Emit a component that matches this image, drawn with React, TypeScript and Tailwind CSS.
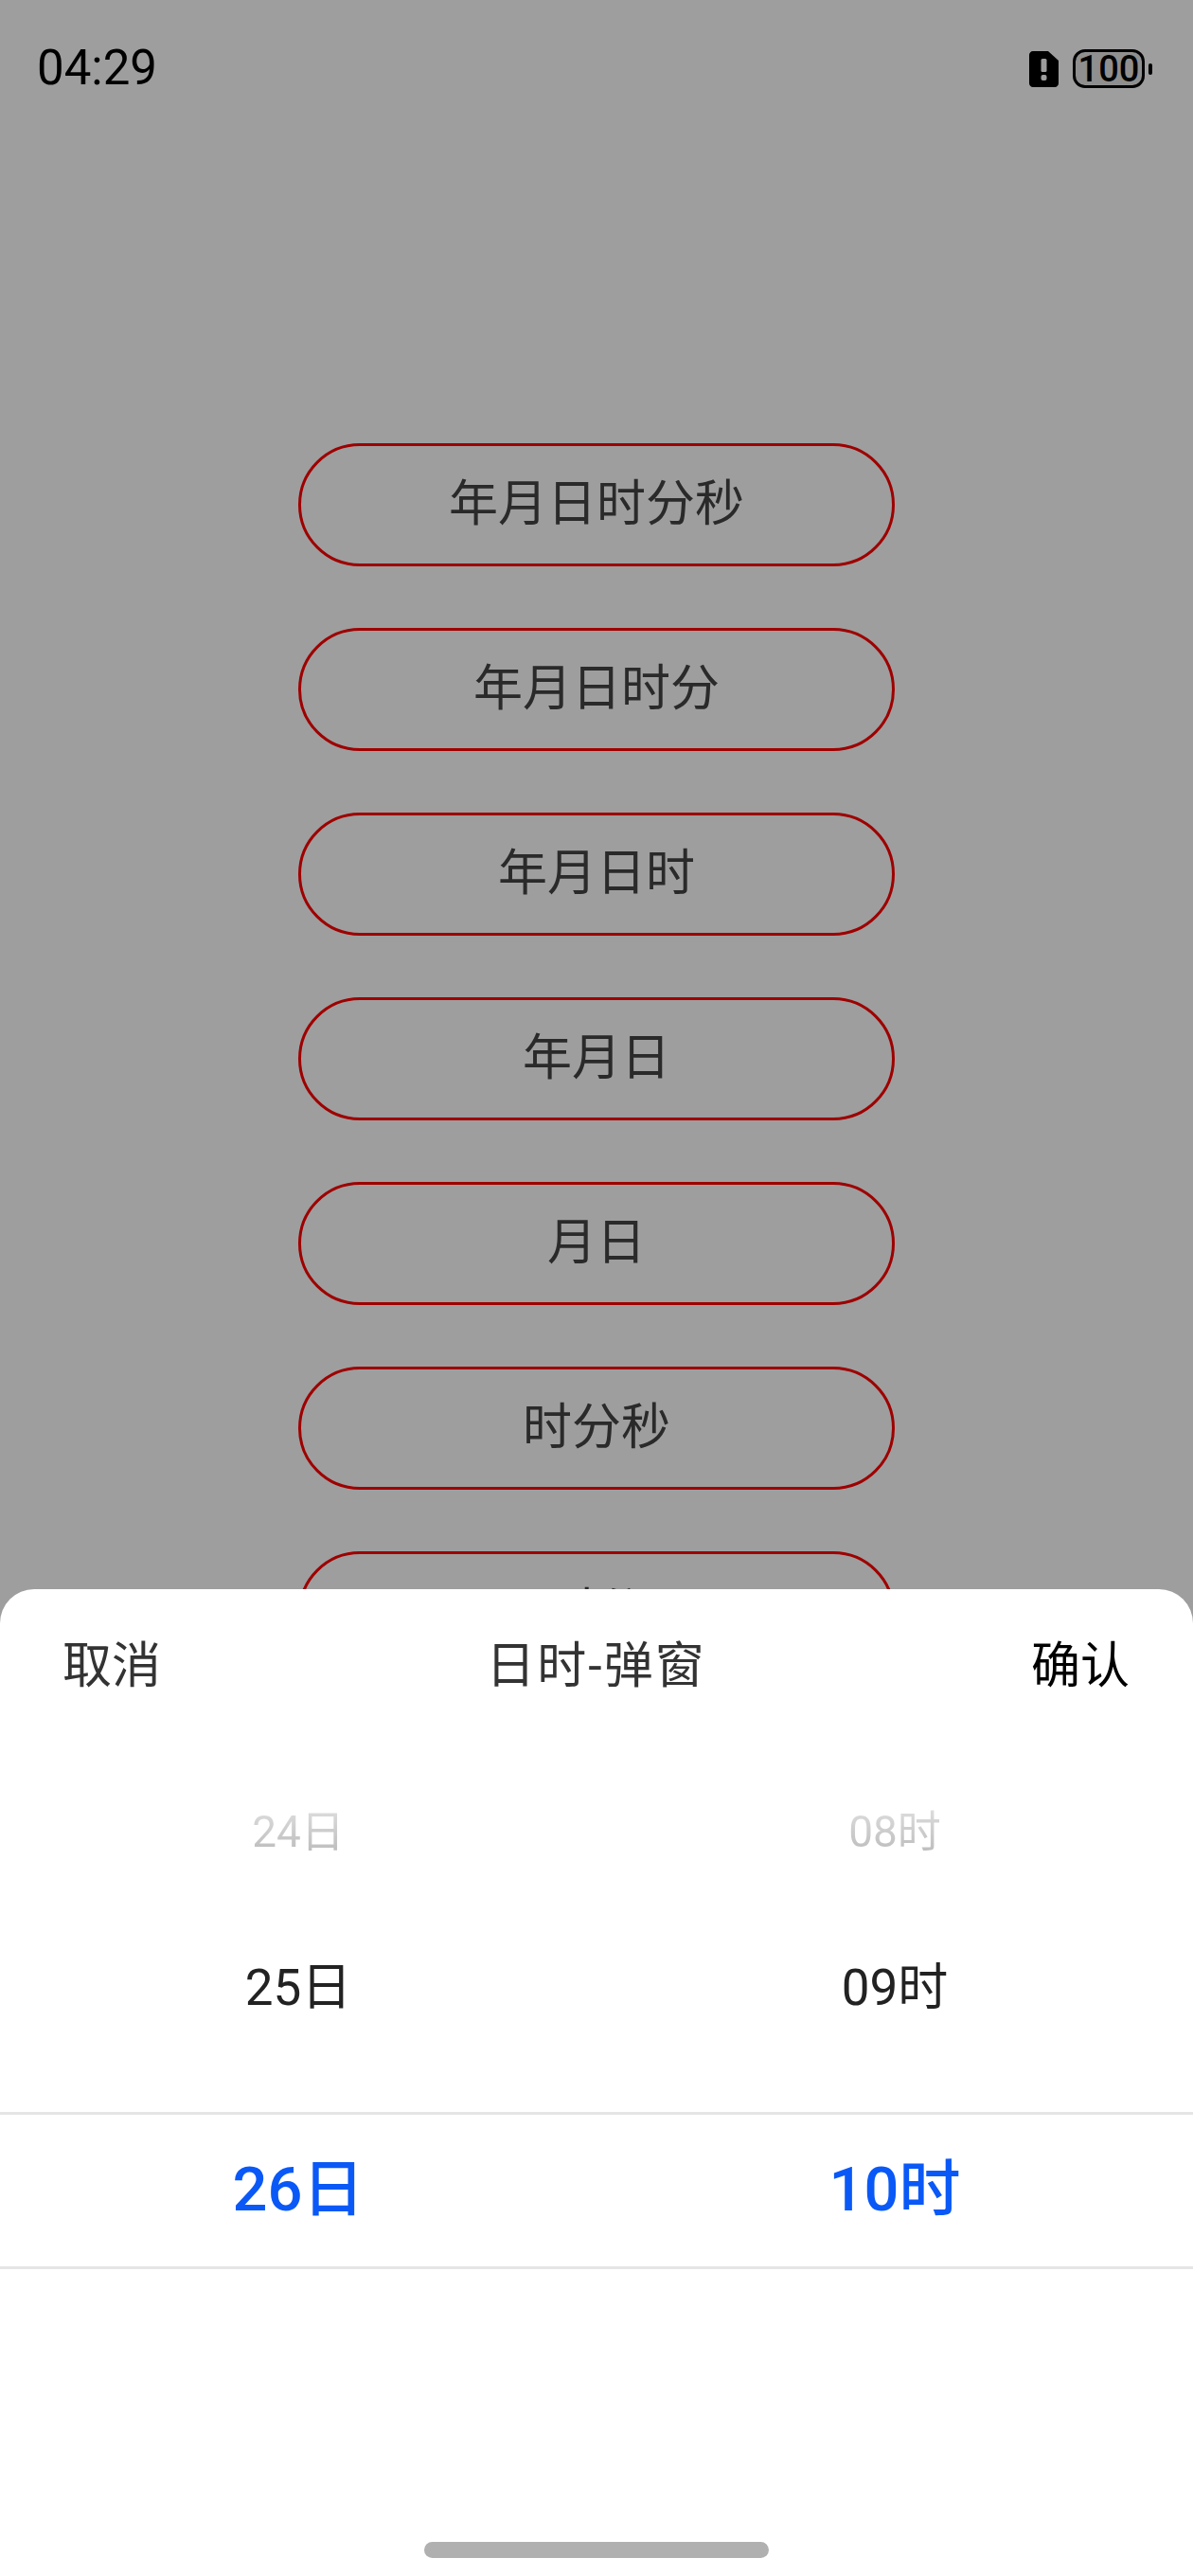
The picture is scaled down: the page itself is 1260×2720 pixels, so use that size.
const cjk = "font-['Roboto','Noto_Sans_CJK_SC',sans-serif]";

const options = ['年月日时分秒', '年月日时分', '年月日时', '年月日', '月日', '时分秒', '时分'];

const StatusBar = () => (
  <div className="relative z-20 h-[142px] flex items-start justify-between pl-[39px] pr-[43px] pt-[42px] text-black">
    <span className="text-[51px] leading-[59px] font-['Roboto',sans-serif]">04:29</span>
    <div className="flex items-center mt-[10px]">
      <svg width="31" height="38" viewBox="0 0 31 38" className="mr-[15px]">
        <path d="M4 0H20L31 10V34C31 36.2 29.2 38 27 38H4C1.8 38 0 36.2 0 34V4C0 1.8 1.8 0 4 0Z" fill="#000" />
        <rect x="12.5" y="8" width="6" height="14" rx="1.5" fill="#9e9e9e" />
        <rect x="12.5" y="25" width="6" height="6" rx="2" fill="#9e9e9e" />
      </svg>
      <div className="w-[76px] h-[41px] rounded-[13px] border-[3px] border-black flex items-center justify-center bg-[#8f8f8f]">
        <span className="text-[38px] leading-none font-medium font-['Roboto',sans-serif]">100</span>
      </div>
      <div className="w-[4px] h-[12px] ml-[4px] rounded-full bg-black" />
    </div>
  </div>
);

export default function App() {
  return (
    <div className={`relative w-[1260px] h-[2720px] overflow-hidden bg-white ${cjk}`}>
      <StatusBar />

      <div className="flex flex-col items-center gap-[65px] pt-[326px]">
        {options.map((label) => (
          <button
            key={label}
            className="w-[630px] h-[130px] shrink-0 rounded-[65px] border-[3px] border-[#ff0000] flex items-center justify-center text-[52px] text-[#444444]"
          >
            {label}
          </button>
        ))}
      </div>

      {/* dim layer */}
      <div className="absolute inset-0 z-10 bg-black/38" />

      <div className="absolute left-0 right-0 bottom-0 z-20 h-[1042px] bg-white rounded-t-[36px] flex flex-col">
        <div className="h-[164px] shrink-0 flex items-center justify-between pl-[66px] pr-[67px] text-[52px]">
          <span className="text-[#333333]">取消</span>
          <span className="text-[#333333] tracking-[2px]">日时-弹窗</span>
          <span className="text-black">确认</span>
        </div>

        {/* wheel */}
        <div className="grid grid-cols-2 h-[184px] shrink-0 text-center items-center">
          <span className="text-[46px] bg-gradient-to-b from-[#e4e4e4] to-[#b4b4b4] bg-clip-text text-transparent">24日</span>
          <span className="text-[46px] bg-gradient-to-b from-[#e4e4e4] to-[#b4b4b4] bg-clip-text text-transparent">08时</span>
        </div>
        <div className="grid grid-cols-2 h-[148px] shrink-0 text-center items-center text-[53px] text-[#222222]">
          <span>25日</span>
          <span>09时</span>
        </div>
        <div className="grid grid-cols-2 h-[166px] mt-[56px] shrink-0 text-center items-center text-[65px] font-medium text-[#0a59f7] border-y-[3px] border-[#e5e5e5]">
          <span>26日</span>
          <span>10时</span>
        </div>

        <div className="mt-auto mb-[19px] mx-auto w-[364px] h-[17px] rounded-full bg-[#b0b0b0]" />
      </div>
    </div>
  );
}
